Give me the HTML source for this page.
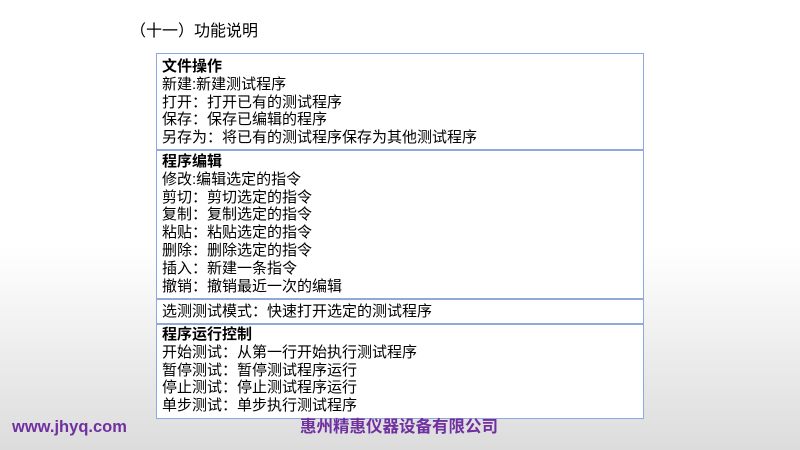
<!DOCTYPE html>
<html><head><meta charset="utf-8"><style>
html,body{margin:0;padding:0}
body{width:800px;height:450px;position:relative;overflow:hidden;background:linear-gradient(#fff 0,#fff 55%,#dcdcdc 100%);font-family:"Liberation Sans","Noto Sans CJK SC",sans-serif;color:#000}
.t{position:absolute;left:130px;top:21px;font-size:16px;line-height:22px}
.box{position:absolute;left:156px;top:53px;width:486px;height:364px;border:1px solid #8ea9db;background:#fff}
.s{position:absolute;left:0;width:486px;box-sizing:border-box;padding-left:5px;font-size:15px;line-height:17.8px;white-space:nowrap}
.d{position:absolute;left:0;width:486px;height:0;border-top:2px solid #8ea9db}
b{font-weight:bold}
.f{position:absolute;top:417px;font-weight:bold;color:#7030a0;line-height:20px}
</style></head><body>
<div class="t">（十一）功能说明</div>
<div class="box">
<div class="s" style="top:4px"><b>文件操作</b><br>新建:新建测试程序<br>打开：打开已有的测试程序<br>保存：保存已编辑的程序<br>另存为：将已有的测试程序保存为其他测试程序</div>
<div class="d" style="top:95px"></div>
<div class="s" style="top:99px"><b>程序编辑</b><br>修改:编辑选定的指令<br>剪切：剪切选定的指令<br>复制：复制选定的指令<br>粘贴：粘贴选定的指令<br>删除：删除选定的指令<br>插入：新建一条指令<br>撤销：撤销最近一次的编辑</div>
<div class="d" style="top:244px"></div>
<div class="s" style="top:249px">选测测试模式：快速打开选定的测试程序</div>
<div class="d" style="top:269px"></div>
<div class="s" style="top:272px"><b>程序运行控制</b><br>开始测试：从第一行开始执行测试程序<br>暂停测试：暂停测试程序运行<br>停止测试：停止测试程序运行<br>单步测试：单步执行测试程序</div>
</div>
<div class="f" style="left:12px;font-size:16.5px">www.jhyq.com</div>
<div class="f" style="left:300px;font-size:16.5px">惠州精惠仪器设备有限公司</div>
</body></html>
